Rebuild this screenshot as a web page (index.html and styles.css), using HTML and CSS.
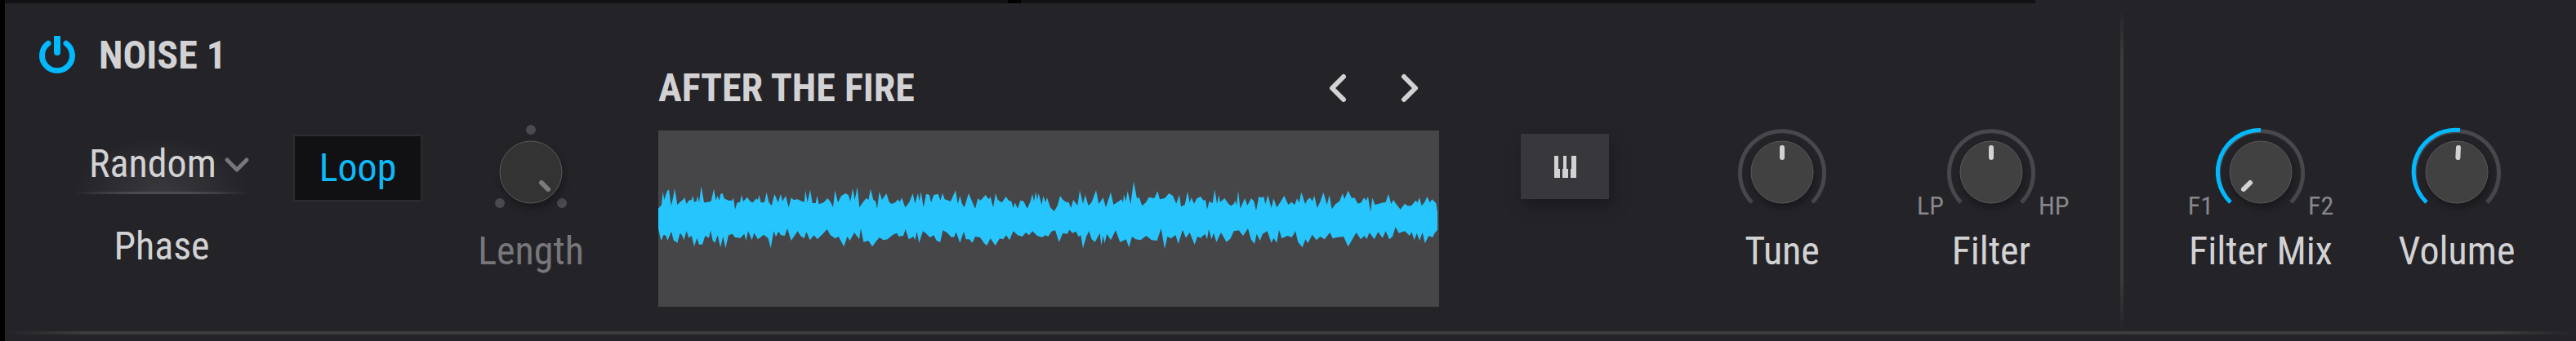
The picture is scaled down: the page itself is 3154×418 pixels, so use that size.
FILE: index.html
```
<!DOCTYPE html>
<html lang="en">
<head>
    <meta charset="UTF-8">
    <meta name="viewport" content="width=device-width, initial-scale=1.0">
    <title>Noise 1</title>
    <link rel="stylesheet" href="styles.css">
</head>
<body>

    <div class="tabs-edge">
        <span class="edge-left"></span>
        <span class="edge-right"></span>
    </div>

    <main class="panel">

        <section class="settings">
            <header class="heading">
                <button class="power" type="button" aria-label="Power" aria-pressed="true">
                    <svg viewBox="0 0 46 48">
                        <path d="M12 9.2 A18.5 18.5 0 1 0 34 9.2" />
                        <path class="stem" d="M23 4 V20" />
                        <rect x="19" y="0" width="8" height="6" />
                    </svg>
                </button>
                <h1>NOISE 1</h1>
            </header>

            <div class="controls">
                <div class="phase">
                    <div class="dropdown">
                        <select id="phase">
                            <option>Random</option>
                            <option>Fixed</option>
                        </select>
                        <svg class="chevron" viewBox="0 0 30 18"><path d="M3 3 L15 15 L27 3" /></svg>
                    </div>
                    <label for="phase">Phase</label>
                </div>

                <button class="loop" type="button" aria-pressed="true">Loop</button>

                <div class="knob off">
                    <div class="dial">
                        <svg viewBox="0 0 108 108">
                            <circle class="dot" cx="54" cy="2" r="6" />
                            <circle class="dot" cx="16" cy="92" r="6" />
                            <circle class="dot" cx="92" cy="92" r="6" />
                            <circle class="cap" cx="54" cy="54" r="38" />
                            <path class="pointer" d="M67 67 L75 75" />
                        </svg>
                        <input id="length" type="range" value="100" disabled>
                    </div>
                    <label for="length">Length</label>
                </div>
            </div>
        </section>

        <section class="sample">
            <header class="sample-head">
                <h2>AFTER THE FIRE</h2>
                <div class="browse">
                    <button type="button" aria-label="Previous sample">
                        <svg viewBox="0 0 20 36"><path d="M17 4 L3 18 L17 32" /></svg>
                    </button>
                    <button type="button" aria-label="Next sample">
                        <svg viewBox="0 0 20 36"><path d="M3 4 L17 18 L3 32" /></svg>
                    </button>
                </div>
            </header>
            <svg class="wave" viewBox="18 -165 2868 648" preserveAspectRatio="none">
                <g>
                    <path d="M18 160 18 122 30 108 35 60 40 90 50 58 57 52 65 112 72 85 78 48 88 108 98 98 110 88 114 80 122 105 130 92 140 90 145 75 150 98 158 95 162 75 168 100 176 40 186 100 198 98 212 95 222 50 230 92 236 75 242 92 247 68 254 66 260 85 275 92 290 92 294 82 300 125 308 100 318 98 324 72 330 96 345 80 355 95 365 100 378 85 384 90 388 72 395 100 408 98 416 62 424 98 434 112 445 68 458 100 468 68 474 95 486 75 497 118 506 82 515 90 530 88 545 95 554 98 559 55 566 100 576 52 584 102 596 102 601 75 608 106 625 100 640 84 652 100 660 118 667 55 678 100 690 75 706 66 716 72 724 95 732 48 740 90 749 42 757 118 770 98 782 84 790 90 798 50 808 90 816 95 822 122 830 60 840 90 856 66 866 98 876 105 890 98 898 88 905 98 912 82 925 118 940 98 953 66 961 105 961 160Z" />
                    <path d="M18 159 18 195 28 240 38 218 46 222 52 240 66 206 74 238 88 248 98 212 106 222 112 238 122 205 130 230 140 222 150 262 160 230 168 254 180 254 190 222 204 230 210 202 218 240 226 248 236 220 246 265 256 225 265 268 276 220 290 215 300 228 320 230 334 215 340 240 348 205 362 238 370 212 384 235 405 218 422 232 431 268 442 205 450 226 460 206 468 220 482 222 492 195 506 240 530 205 540 222 554 232 562 208 575 238 590 220 602 235 625 212 638 198 650 220 668 232 680 225 700 262 712 225 722 240 738 210 756 235 762 195 772 245 790 240 804 262 820 240 830 228 845 238 860 235 880 218 894 212 902 225 918 222 926 198 938 235 955 225 961 238 961 159Z" />
                </g>
                <g transform="translate(960 0)">
                    <path d="M0 160 0 105 12 65 17 95 23 60 32 118 42 68 54 72 60 100 70 72 86 68 94 92 102 65 110 88 132 95 150 55 158 105 166 75 174 105 182 118 198 66 208 90 222 122 232 85 242 92 260 72 272 88 278 78 288 118 297 66 305 90 320 100 335 78 345 92 355 95 362 120 368 100 378 122 388 92 400 95 413 122 425 95 432 68 438 95 445 60 450 90 455 66 466 108 472 75 480 98 486 82 498 118 512 132 524 112 534 76 545 90 556 98 565 98 574 120 582 90 598 110 606 55 618 104 626 72 638 112 650 98 666 55 676 105 692 82 702 118 720 62 730 108 745 98 760 88 765 100 768 70 775 95 782 58 793 106 804 22 816 85 824 80 835 112 850 98 860 80 880 84 892 58 900 88 918 84 934 66 948 75 961 105 961 160Z" />
                    <path d="M0 159 0 240 8 208 16 248 30 205 40 212 56 228 70 220 80 240 94 245 103 202 118 210 135 228 146 225 152 208 166 248 180 206 188 235 200 235 212 248 222 225 240 228 255 250 265 258 278 232 296 258 312 232 325 235 336 220 348 238 362 205 378 220 395 225 408 210 420 220 432 205 450 222 468 228 480 220 490 225 502 206 516 202 530 245 544 212 560 215 568 200 580 212 592 206 602 225 610 220 618 268 630 225 640 205 650 235 662 245 680 212 685 258 692 222 697 250 706 215 720 238 738 202 754 245 766 240 776 235 787 265 798 225 812 235 830 238 850 222 870 238 890 240 905 195 918 270 928 225 942 232 956 220 961 225 961 159Z" />
                </g>
                <g transform="translate(1920 0)">
                    <path d="M0 160 0 105 12 72 18 115 32 108 42 60 50 100 56 82 66 104 76 85 90 78 100 92 108 90 114 125 122 95 134 102 142 52 150 105 157 72 162 98 178 84 192 104 202 112 212 104 217 92 222 110 228 58 236 122 252 84 262 110 276 84 286 95 294 130 304 78 314 82 322 78 328 106 337 72 350 120 358 85 370 118 382 100 397 75 412 108 424 98 436 108 444 85 452 100 460 62 474 105 482 90 492 82 500 95 508 75 518 120 530 95 541 62 554 108 563 72 572 124 586 105 600 95 612 66 618 88 632 56 645 84 655 82 668 104 680 100 690 82 698 92 705 78 714 135 721 82 730 108 745 104 760 100 770 98 780 68 790 105 798 90 808 105 824 125 840 104 850 112 864 112 880 92 887 100 894 82 902 112 912 100 922 78 932 100 940 88 955 102 960 135 960 160Z" />
                    <path d="M0 159 0 225 8 252 24 200 36 230 50 210 68 255 78 225 90 230 106 215 114 235 120 198 130 235 138 212 148 245 165 210 185 245 200 232 212 205 230 202 246 222 264 195 275 235 288 252 296 215 308 240 318 215 335 205 350 248 358 230 370 248 378 200 388 232 410 222 425 228 438 205 448 245 464 265 475 235 484 250 500 218 515 238 530 225 545 235 565 210 575 232 590 228 615 225 632 262 650 230 662 210 678 235 692 222 700 235 710 210 728 235 742 208 758 230 770 205 783 235 795 225 806 190 818 212 840 205 858 222 865 208 875 238 884 212 894 240 905 210 914 250 928 222 942 228 950 212 960 200 960 159Z" />
                </g>
            </svg>
        </section>

        <section class="pitch">
            <button class="keys" type="button" aria-label="Key tracking">
                <svg viewBox="0 0 27 27">
                    <path d="M0 0 H5 V16 H7 V27 H0 Z M11 0 H15 V16 H17 V27 H10 V16 H11 Z M21 0 H27 V27 H20 V16 H21 Z" />
                </svg>
            </button>

            <div class="knob">
                <div class="dial">
                    <svg viewBox="0 0 108 108">
                        <path class="track" d="M17 91 A51.5 51.5 0 1 1 91 91" />
                        <circle class="cap" cx="54" cy="54" r="38" />
                        <path class="pointer" d="M54 24 V36" />
                    </svg>
                    <input id="tune" type="range" value="50">
                </div>
                <label for="tune">Tune</label>
            </div>

            <div class="knob">
                <div class="dial">
                    <span class="low">LP</span>
                    <svg viewBox="0 0 108 108">
                        <path class="track" d="M17 91 A51.5 51.5 0 1 1 91 91" />
                        <circle class="cap" cx="54" cy="54" r="38" />
                        <path class="pointer" d="M54 24 V36" />
                    </svg>
                    <span class="high">HP</span>
                    <input id="filter" type="range" value="50">
                </div>
                <label for="filter">Filter</label>
            </div>
        </section>

        <section class="output">
            <div class="knob">
                <div class="dial">
                    <span class="low">F1</span>
                    <svg viewBox="0 0 108 108">
                        <path class="track" d="M17 91 A51.5 51.5 0 1 1 91 91" />
                        <path class="level" d="M17 91 A51.5 51.5 0 0 1 54 2.5" />
                        <circle class="cap" cx="54" cy="54" r="38" />
                        <path class="pointer" d="M33 75 L41 67" />
                    </svg>
                    <span class="high">F2</span>
                    <input id="mix" type="range" value="0">
                </div>
                <label for="mix">Filter Mix</label>
            </div>

            <div class="knob">
                <div class="dial">
                    <svg viewBox="0 0 108 108">
                        <path class="track" d="M17 91 A51.5 51.5 0 1 1 91 91" />
                        <path class="level" d="M17 91 A51.5 51.5 0 0 1 58 2.6" />
                        <circle class="cap" cx="54" cy="54" r="38" />
                        <path class="pointer" d="M56 24 L55.4 36" />
                    </svg>
                    <input id="volume" type="range" value="51">
                </div>
                <label for="volume">Volume</label>
            </div>
        </section>

    </main>

    <hr class="rule">

</body>
</html>
```
FILE: styles.css
```
* {
    box-sizing: border-box;
}

body {
    margin: 0;
    min-height: 100vh;
    display: flex;
    flex-direction: column;
    border-left: 6px solid #000;
    padding-bottom: 8px;
    background-color: #242328;
    color: #d2d2d4;
    font-family: "Roboto Condensed", Roboto, sans-serif;
    font-size: 48px;
    line-height: 56px;
}

h1, h2 {
    margin: 0;
    font-size: 48px;
    font-weight: 700;
    white-space: nowrap;
}

button, select {
    font: inherit;
    color: inherit;
    border: none;
    padding: 0;
    background: none;
    cursor: pointer;
}

svg {
    display: block;
    overflow: visible;
}

/* Lower edge of the tabs above the panel */
.tabs-edge {
    display: grid;
    grid-template-columns: 1228fr 1242fr 646fr;
    column-gap: 16px;
    height: 4px;
    background: linear-gradient(90deg, #000 60%, transparent 60%);
}

.tabs-edge span {
    background-color: #121214;
}

.panel {
    flex: 1;
    display: grid;
    grid-template-columns: 800fr 956fr 834fr 558fr;
}

/* Power, phase, loop and length */
.settings {
    padding: 36px 0 0 41px;
}

.heading {
    display: flex;
    align-items: center;
    gap: 28px;
}

.power svg {
    width: 46px;
    height: 48px;
    fill: none;
    stroke: #00b9ff;
    stroke-width: 7px;
    stroke-linecap: round;
}

.power .stem {
    stroke-width: 8px;
}

.power rect {
    fill: #00b9ff;
    stroke: none;
}

.controls {
    display: flex;
    align-items: flex-start;
    gap: 54px;
    margin-top: 61px;
    padding-left: 44px;
}

.phase {
    width: 214px;
    padding-top: 4px;
    text-align: center;
}

.dropdown {
    position: relative;
    margin-bottom: 36px;
    background:
        linear-gradient(90deg, transparent, #4c4b4f 35%, #4c4b4f 65%, transparent) bottom / 100% 3px no-repeat,
        radial-gradient(ellipse 50% 90% at 50% 100%, #3a393e, transparent);
}

.dropdown select {
    appearance: none;
    display: block;
    width: 100%;
    padding: 12px 32px 9px 18px;
}

.chevron {
    position: absolute;
    right: 0;
    top: 32px;
    width: 30px;
    height: 18px;
    fill: none;
    stroke: #77767a;
    stroke-width: 5px;
    stroke-linecap: round;
    stroke-linejoin: round;
    pointer-events: none;
}

.loop {
    width: 158px;
    height: 82px;
    margin-top: 8px;
    border: 2px solid #2c2b2f;
    background-color: #111113;
    color: #0fb9f8;
}

/* Sample browser */
.sample {
    padding-top: 76px;
}

.sample-head {
    display: flex;
    justify-content: space-between;
    align-items: center;
    margin-bottom: 24px;
    padding-right: 12px;
}

.browse {
    display: flex;
    gap: 40px;
}

.browse button {
    display: flex;
    justify-content: center;
    width: 48px;
}

.browse svg {
    width: 20px;
    height: 36px;
    fill: none;
    stroke: #d2d2d4;
    stroke-width: 6px;
    stroke-linecap: round;
    stroke-linejoin: round;
}

.wave {
    width: 100%;
    height: 216px;
    background-color: #464648;
    fill: #27c5fe;
}

/* Knobs */
.pitch, .output {
    display: flex;
    align-items: flex-start;
    padding-top: 153px;
}

.pitch {
    gap: 68px;
    padding-left: 100px;
}

.output {
    gap: 52px;
    padding-left: 78px;
    background: linear-gradient(transparent 1%, #3b3b3c 16%, #3b3b3c 84%, transparent) left / 4px 100% no-repeat;
}

.keys {
    display: flex;
    justify-content: center;
    align-items: center;
    width: 108px;
    height: 80px;
    margin: 7px 50px 0 0;
    background-color: #38373b;
    box-shadow: 4px 10px 16px #1c1b1f;
}

.keys svg {
    width: 27px;
    height: 27px;
    fill: #d2d2d4;
}

.knob {
    width: 188px;
    text-align: center;
    white-space: nowrap;
}

.controls .knob {
    width: 158px;
}

.dial {
    position: relative;
    display: grid;
    grid-template-columns: minmax(0, 1fr) 108px minmax(0, 1fr);
    column-gap: 4px;
    align-items: end;
    margin-bottom: 15px;
}

.dial svg {
    grid-column: 2;
    grid-row: 1;
    width: 108px;
    height: 108px;
    fill: none;
}

/* The slider lies over the drawn knob and takes the input */
.dial input {
    position: absolute;
    inset: 0;
    width: 100%;
    height: 100%;
    margin: 0;
    opacity: 0;
    cursor: pointer;
}

.low, .high {
    grid-row: 1;
    color: #88878b;
    font-size: 32px;
    line-height: 26px;
}

.low {
    text-align: right;
}

.high {
    grid-column: 3;
    text-align: left;
}

.track, .level {
    stroke: #48474c;
    stroke-width: 5px;
}

.level {
    stroke: #00b9ff;
}

.cap {
    fill: #414142;
    stroke: #5a5a5b;
    stroke-width: 1px;
    filter: drop-shadow(2px 6px 5px #19181c);
}

.pointer {
    stroke: #d2d2d4;
    stroke-width: 6px;
    stroke-linecap: round;
}

.dot {
    fill: #4a494e;
}

.off {
    color: #77767a;
}

.off .cap {
    fill: #333334;
}

.off .pointer {
    stroke: #7c7c7e;
}

.rule {
    width: 100%;
    height: 4px;
    margin: 0;
    border: none;
    background: linear-gradient(90deg, transparent, #3b3b3c 3%, #3b3b3c 97%, transparent);
}
```
